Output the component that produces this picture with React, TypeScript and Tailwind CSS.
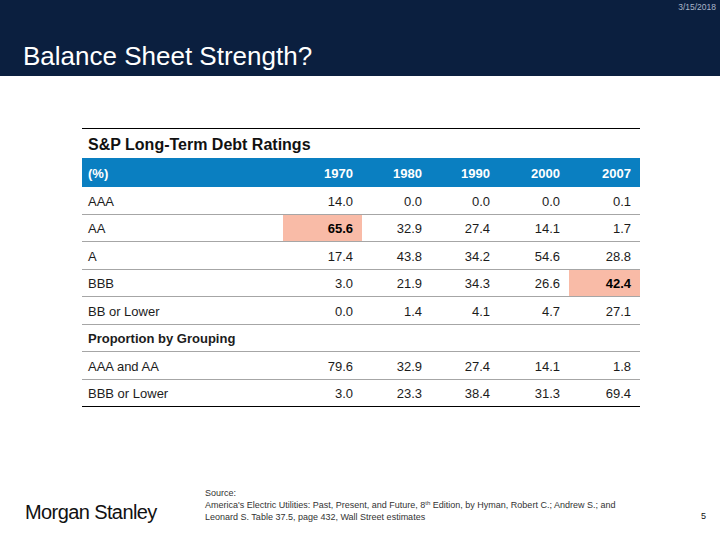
const ROWS: { label: string; values: string[]; hi?: number; section?: boolean; last?: boolean }[] = [
  { label: 'AAA', values: ['14.0', '0.0', '0.0', '0.0', '0.1'] },
  { label: 'AA', values: ['65.6', '32.9', '27.4', '14.1', '1.7'], hi: 0 },
  { label: 'A', values: ['17.4', '43.8', '34.2', '54.6', '28.8'] },
  { label: 'BBB', values: ['3.0', '21.9', '34.3', '26.6', '42.4'], hi: 4 },
  { label: 'BB or Lower', values: ['0.0', '1.4', '4.1', '4.7', '27.1'] },
  { label: 'Proportion by Grouping', values: [], section: true },
  { label: 'AAA and AA', values: ['79.6', '32.9', '27.4', '14.1', '1.8'] },
  { label: 'BBB or Lower', values: ['3.0', '23.3', '38.4', '31.3', '69.4'], last: true },
];

const YEARS = ['1970', '1980', '1990', '2000', '2007'];

const GRID = 'grid grid-cols-[201px_79px_69px_68px_70px_71px]';

export default function App() {
  return (
    <div className="w-[720px] h-[540px] bg-white flex flex-col font-['Liberation_Sans',Arial,sans-serif]">
      <header className="h-[76px] bg-[#0b1f3f] flex flex-col">
        <div className="pt-[3px] pr-[4px] text-right text-[8.5px] leading-[8px] text-[#a9b5c9]">3/15/2018</div>
        <h1 className="mt-[32px] pl-[23px] text-[26px] leading-[26px] text-white">Balance Sheet Strength?</h1>
      </header>

      <div className="ml-[82px] mt-[52px] w-[558px] border-t border-black">
        <div className="h-[29px] flex items-center pl-[6px] pt-[3px] text-[16px] font-bold text-[#111]">S&amp;P Long-Term Debt Ratings</div>
        <div className={`${GRID} h-[29px] items-center pt-[3px] bg-[#0a7fc1] text-white text-[13px] font-bold`}>
          <div className="pl-[6px]">(%)</div>
          {YEARS.map(y => (
            <div key={y} className="text-right pr-[9px]">{y}</div>
          ))}
        </div>
        {ROWS.map(r => (
          <div
            key={r.label}
            className={`${GRID} h-[27.5px] border-b ${r.last ? 'border-black' : 'border-[#a6a6a6]'} text-[13px] text-[#1c1c1c]`}
          >
            <div className={`pl-[6px] pt-[2px] flex items-center whitespace-nowrap ${r.section ? 'font-bold' : ''}`}>{r.label}</div>
            {r.values.map((v, i) => (
              <div
                key={i}
                className={`flex items-center justify-end pr-[9px] pt-[2px] ${r.hi === i ? 'bg-[#f9bba7] font-bold text-black' : ''}`}
              >
                {v}
              </div>
            ))}
          </div>
        ))}
      </div>

      <footer className="mt-auto pb-[17px] flex items-start">
        <div className="ml-[25px] mt-[15px] w-[180px] text-[20px] leading-[20px] tracking-[-0.6px] text-[#111]">Morgan Stanley</div>
        <div className="w-[470px] text-[9px] leading-[12px] text-[#333]">
          <div>Source:</div>
          <div>
            America's Electric Utilities: Past, Present, and Future, 8<sup className="text-[6px]">th</sup> Edition, by Hyman, Robert C.; Andrew S.; and
          </div>
          <div>Leonard S. Table 37.5, page 432, Wall Street estimates</div>
        </div>
        <div className="ml-auto mr-[14px] mt-[25px] text-[9px] leading-[9px] text-[#111]">5</div>
      </footer>
    </div>
  );
}
